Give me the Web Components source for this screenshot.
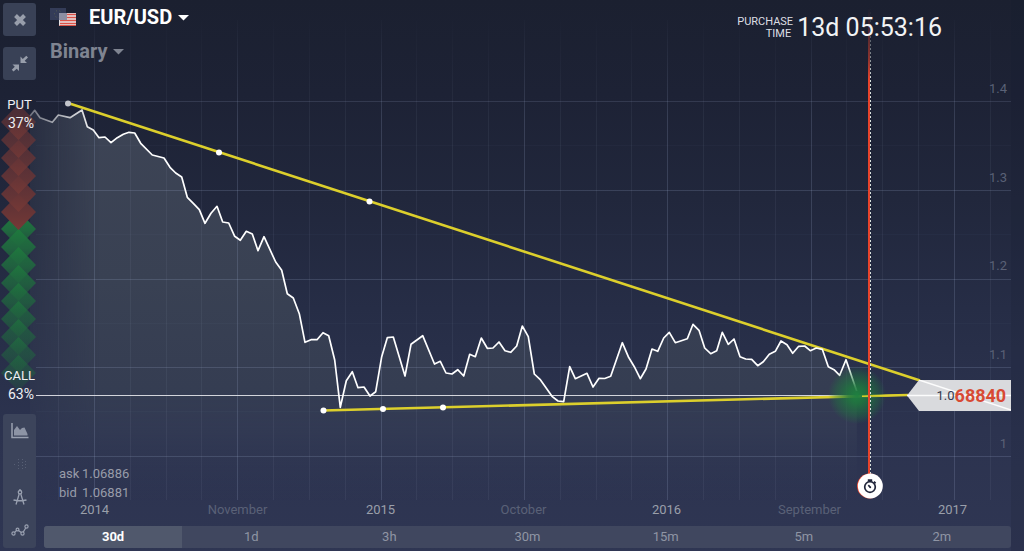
<!DOCTYPE html>
<html lang="en">
<head>
<meta charset="utf-8">
<title>EUR/USD Binary</title>
<style>
  html, body { margin: 0; min-height: 100vh; background: #2d3451; }
  body { font-family: Roboto, "Liberation Sans", sans-serif; font-size: 13px; color: #fff; }
</style>
</head>
<body>
<trade-room></trade-room>
<script>
const define = (name, html, setup) => customElements.define(name, class extends HTMLElement {
  constructor() {
    super();
    this.attachShadow({ mode: 'open' }).innerHTML = html;
  }
  connectedCallback() { if (setup) setup(this, this.shadowRoot); }
});

/* Price history in chart units (1024 x 551) */
const PRICE = `30,116 34.7,110.3 40,117.7 52.3,122.3 58.3,115 70,117.7 82,110 87.3,126.7 93.3,130 99,137.7 105,137 111,142.7
117.3,137.7 123.3,134.3 129,132.3 134.7,133 140.7,143.3 152.3,155 164,158 170,167.3 175.7,173 181.7,177 187.3,197.3 193.3,203.3
199.3,209.7 205,223.3 211,213.3 217,206.3 222.7,222 228.7,223 234.7,236.3 240.3,240.3 246.3,231.3 252.3,234 258,250.7 264,236.7
275.7,262 281.7,270.3 287.3,293.7 293.3,298 299.3,313.7 305,342.3 311,339.7 317,339.7 323,332.7 328.7,335.7 334.7,360 340.3,407.3
346.3,380.7 352.3,371.7 358,387.7 364,387 370,396 375.7,391.7 381.7,356.7 387.3,337.7 393.3,337 405,376 411,344.3 422.7,335.7
434.5,364 440.3,361.3 446,373 452,374 457.7,369.7 463.7,376 469.7,354.3 475.3,356.7 481.3,338 487.3,348.3 493,348 499,342
505,350.7 510.7,352.3 516.7,346 522.3,326 528.3,336.7 534.3,374 540,379.3 552,396.3 558,401 563.7,401.7 569.7,366.7 575.3,378.7
587,373.3 593,387 599,378.3 604.7,378.5 610.7,376.3 622.3,342.7 628.3,356.7 634.3,366.7 640.3,378.7 646,369 652,349 657.7,351.3
663.7,338 669.3,332.3 675.3,342.7 687.3,338.7 693,324.3 699,330.3 704.7,348 710.7,353.7 716.7,350.7 722.3,332.3 728.3,344.3
734,339 740,356.7 745.7,359 751.7,359.3 757.7,365.7 763.3,361.7 769.3,354.3 775.3,351.3 781,341 787,344.7 792.7,353.3
798.7,346.3 804.7,346 810.3,350.7 816.3,348 822.3,349.3 828.3,366.7 834,369.7 839.7,375.3 846,359.7 856.7,391`;

let grid = '';
for (let i = -1; i < 26; i++) {
  const x = Math.round(94 + i * 35.83) + .5;
  grid += `<path d="M${x} 20V500" class="${i % 4 === 0 ? 'major' : 'minor'}"/>`;
}
for (let i = 0; i < 5; i++) grid += `<path d="M36 ${Math.round(101 + i * 88.8) + .5}H1011" class="major"/>`;
for (let i = 0; i < 4; i++) grid += `<path d="M36 ${Math.round(145 + i * 88.8) + .5}H1011" class="faint"/>`;

define('trade-chart', `
<style>
  :host { display: block; position: absolute; inset: 0; }
  .plot { display: block; width: 100%; height: 100%; }
  path, polyline { fill: none; }
  .major { stroke: #a0b0d0; stroke-opacity: .2; }
  .minor { stroke: #a0b0d0; stroke-opacity: .08; }
  .faint { stroke: #a0b0d0; stroke-opacity: .03; }
</style>
<svg class="plot" viewBox="0 0 1024 551" preserveAspectRatio="none" aria-label="EUR/USD price chart">
  <defs>
    <linearGradient id="bg" x2="0" y2="1">
      <stop offset="0" stop-color="#1b2030"/><stop offset=".17" stop-color="#1d2235"/>
      <stop offset=".36" stop-color="#21273c"/><stop offset=".56" stop-color="#262d46"/>
      <stop offset=".78" stop-color="#2c334f"/><stop offset="1" stop-color="#2f3653"/>
    </linearGradient>
    <linearGradient id="area" gradientUnits="userSpaceOnUse" x1="0" y1="100" x2="0" y2="500">
      <stop offset="0" stop-color="#3d4455"/><stop offset=".45" stop-color="#394153"/>
      <stop offset=".72" stop-color="#353d52"/><stop offset=".82" stop-color="#333b54" stop-opacity=".9"/>
      <stop offset="1" stop-color="#303754" stop-opacity="0"/>
    </linearGradient>
    <linearGradient id="edge" gradientUnits="userSpaceOnUse" x1="30" y1="0" x2="100" y2="0">
      <stop offset="0" stop-color="#fff" stop-opacity=".35"/><stop offset="1" stop-color="#fff"/>
    </linearGradient>
    <linearGradient id="top" gradientUnits="userSpaceOnUse" x1="0" y1="20" x2="0" y2="120">
      <stop offset="0" stop-color="#fff" stop-opacity=".1"/><stop offset="1" stop-color="#fff"/>
    </linearGradient>
    <linearGradient id="expiry" gradientUnits="userSpaceOnUse" x1="0" y1="8" x2="0" y2="80">
      <stop offset="0" stop-color="#fff" stop-opacity="0"/><stop offset=".7" stop-color="#fff" stop-opacity=".55"/><stop offset="1" stop-color="#fff"/>
    </linearGradient>
    <radialGradient id="glow">
      <stop offset="0" stop-color="#1f8040"/><stop offset=".3" stop-color="#1f7a3e" stop-opacity=".85"/>
      <stop offset=".75" stop-color="#1f7a3e" stop-opacity=".35"/><stop offset="1" stop-color="#1f7a3e" stop-opacity="0"/>
    </radialGradient>
    <mask id="edgeMask" maskUnits="userSpaceOnUse" x="0" y="0" width="1024" height="551"><rect width="1024" height="551" fill="url(#edge)"/></mask>
    <mask id="topMask" maskUnits="userSpaceOnUse" x="0" y="0" width="1024" height="551"><rect width="1024" height="551" fill="url(#top)"/></mask>
    <mask id="expiryMask" maskUnits="userSpaceOnUse" x="0" y="0" width="1024" height="551"><rect width="1024" height="551" fill="url(#expiry)"/></mask>
  </defs>
  <rect width="1024" height="551" fill="url(#bg)"/>
  <g mask="url(#edgeMask)"><polygon points="${PRICE} 857,500 30,500" fill="url(#area)"/></g>
  <g mask="url(#topMask)">${grid}</g>
  <rect x="1011" width="13" height="551" fill="#171c30" fill-opacity=".15"/>
  <path d="M36 395.5H908" stroke="#e4e4ea" stroke-opacity=".9"/>
  <g stroke="#dccf2c" stroke-width="2.6">
    <path d="M68 103L920 380.5"/><path d="M323 410.5L908 395"/>
  </g>
  <g mask="url(#edgeMask)"><polyline points="${PRICE}" stroke="#fff" stroke-width="1.7" stroke-linejoin="round"/></g>
  <circle cx="857" cy="395" r="29" fill="url(#glow)"/>
  <path d="M862 396.2L908 395" stroke="#dccf2c" stroke-width="1.6"/>
  <g mask="url(#expiryMask)">
    <path d="M869 8V480" stroke="#e8442c" stroke-width="2"/>
    <path d="M870.5 8V480" stroke="#d8e0dc" stroke-dasharray="2 2"/>
  </g>
  <g fill="#fff">
    <circle cx="68" cy="103.5" r="3" fill="#c3c5cb"/><circle cx="219" cy="152.5" r="3"/><circle cx="369.500" cy="201.500" r="3"/>
    <circle cx="323.500" cy="410.500" r="3"/><circle cx="383" cy="409" r="3"/><circle cx="443" cy="407.500" r="3"/>
  </g>
</svg>`);

define('price-tag', `
<style>
  :host { display: flex; align-items: center; justify-content: flex-end; position: absolute; right: 1.25%; top: 69%;
    width: 104px; height: 31px; box-sizing: border-box; padding-right: 5px; }
  svg { position: absolute; inset: 0; }
  span { position: relative; font-size: 13px; color: #33384e; line-height: 31px; }
  b { position: relative; font-size: 18px; color: #d84a34; line-height: 31px; }
</style>
<svg width="104" height="31" viewBox="0 0 104 31">
  <path d="M0 15.500L12 0H104V31H12Z" fill="#d9dadd"/>
  <path d="M0 15.500H104M12 0L104 30" stroke="#fff" stroke-width="1.500" fill="none" opacity=".9"/>
</svg>
<span><slot name="base"></slot></span><b><slot></slot></b>`);

define('expiry-marker', `
<style>
  :host { display: block; position: absolute; left: 84.96%; top: 88.2%; width: 26px; height: 26px; margin: -13px; }
  svg { display: block; }
</style>
<svg width="26" height="26" viewBox="0 0 26 26" fill="none" stroke="#20253a">
  <circle cx="12.500" cy="13" r="12.500" fill="#e8442c" stroke="none"/><circle cx="13.300" cy="13" r="12.500" fill="#fff" stroke="none"/>
  <circle cx="13" cy="14" r="5.300" stroke-width="1.700"/>
  <path d="M10.800 7.200H15.200M13 7V9M17 8.700L18.600 10.300M13 14L11.300 12.200" stroke-width="1.700"/><circle cx="13.200" cy="14.200" r="1" fill="#20253a" stroke="none"/>
</svg>`);

define('icon-button', `
<style>
  :host { display: block; }
  button { display: flex; align-items: center; justify-content: center; width: 100%; height: 33px; padding: 0; border: 0;
    border-radius: 3px; background: #394156; cursor: pointer; }
  :host([plain]) button { background: none; height: 100%; }
</style>
<button type="button"><slot></slot></button>`, (el, root) => {
  root.querySelector('button').setAttribute('aria-label', el.getAttribute('label'));
});

const diamonds = () => {
  let s = '';
  const d = (y, f, o) => `<path d="M18.500 ${y - 18}L36 ${y}L18.500 ${y + 18}L1 ${y}Z" fill="url(#${f})" opacity="${o}"/>`;
  for (let i = 0; i < 9; i++) s += d(134 + i * 18, 'up', Math.max(.45, 1 - i * .07).toFixed(2));
  for (let i = 5; i >= 0; i--) s += d(27 + i * 18, 'down', (.7 + i * .06).toFixed(2));
  return s;
};
define('mood-gauge', `
<style>
  :host { display: flex; flex-direction: column; justify-content: space-between; position: relative; flex: 1;
    margin: 15px 0 10px; line-height: 19px; text-align: center; color: #eef0f4; }
  svg { position: absolute; left: -3px; top: 0; width: 39px; height: 100%; }
  div { position: relative; display: flex; flex-direction: column; }
  b { font-weight: 400; font-size: 14px; padding-left: 3px; }
</style>
<svg viewBox="0 0 39 309" preserveAspectRatio="none" aria-hidden="true">
  <defs>
    <linearGradient id="up" x2="0" y2="1"><stop offset="0" stop-color="#1e7b3d"/><stop offset=".55" stop-color="#20683f"/><stop offset="1" stop-color="#24503f" stop-opacity=".8"/></linearGradient>
    <linearGradient id="down" x2="0" y2="1"><stop offset="0" stop-color="#5a3036"/><stop offset=".55" stop-color="#683536"/><stop offset="1" stop-color="#763936"/></linearGradient>
  </defs>
  ${diamonds()}
</svg>
<div><span>PUT</span><b>37%</b></div>
<div><span>CALL</span><b>63%</b></div>`);

define('side-rail', `
<style>
  :host { display: flex; flex-direction: column; box-sizing: border-box; padding: 3px; position: relative; }
  .close { margin-bottom: 11px; }
  nav { display: flex; flex-direction: column; height: 134px; border-radius: 3px; background: #3c445b; }
  nav icon-button { flex: 1; }
  svg { display: block; fill: none; stroke: #99a0b0; }
</style>
<icon-button class="close" label="Close"><svg width="33" height="33"><path d="M12.500 12.500L21.500 21.500M21.500 12.500L12.500 21.500" stroke="#989eab" stroke-width="4"/></svg></icon-button>
<icon-button label="Exit full screen"><svg width="33" height="33"><g fill="#989eab" stroke="none">
  <path d="M17.500 9.500V16H24L21.700 13.700L25 10.400L23.300 8.700L19.800 12Z"/><path d="M16 24V17.500H9.500L11.800 19.800L8.800 22.800L10.500 24.500L13.700 21.700Z"/></g></svg></icon-button>
<mood-gauge></mood-gauge>
<nav aria-label="Chart tools">
  <icon-button plain label="Chart type"><svg width="18" height="16" viewBox="0 0 18 16"><path d="M1 0V14.500H17.500" stroke-width="1.500"/><path d="M3 12.500V7L6 3L9 7L11 5L13.500 4.500L16.500 11V12.500Z" fill="#8d94a5" stroke="none"/></svg></icon-button>
  <icon-button plain label="Candles"><svg width="12" height="12" viewBox="0 0 12 12"><path d="M4.500 1V12M8.500 1V12M0 6.500H3M11.500 3V10" stroke-dasharray="1 2" opacity=".3"/></svg></icon-button>
  <icon-button plain label="Drawing tools"><svg width="14" height="17" viewBox="0 0 14 17" stroke-width="1.300"><circle cx="7" cy="3.200" r="1.700"/><path d="M7 0V2M6.200 5L3 15.500M7.800 5L11 15.500M.5 11Q7 12.500 13.500 11"/></svg></icon-button>
  <icon-button plain label="Indicators"><svg width="18" height="14" viewBox="0 0 18 14" stroke-width="1.200"><circle cx="2.500" cy="9.500" r="1.600"/><circle cx="6.500" cy="5.500" r="1.400"/><circle cx="11.500" cy="9.500" r="1.600"/><circle cx="15.500" cy="2.500" r="1.600"/><path d="M3.600 8.400L5.500 6.500M7.500 6.500L10.300 8.600M12.200 8.100L14.700 4"/></svg></icon-button>
</nav>`);

define('drop-down', `
<style>
  :host { display: flex; align-items: center; gap: 5px; font-size: 20px; font-weight: 700; line-height: 22px; }
  select { appearance: none; border: 0; padding: 0; margin: 0; background: none; color: inherit; font: inherit; cursor: pointer; }
  svg { display: block; fill: currentColor; pointer-events: none; }
</style>
<select></select><svg width="11" height="7" viewBox="0 0 11 7"><path d="M0 1H11L5.500 6.500Z"/></svg>`, (el, root) => {
  const s = root.querySelector('select');
  s.setAttribute('aria-label', el.getAttribute('label'));
  s.add(new Option(el.getAttribute('value')));
});

define('room-header', `
<style>
  :host { display: flex; justify-content: space-between; position: relative; padding-left: 11px; }
  .pair { display: flex; gap: 13px; margin-top: 6px; height: 22px; align-items: center; }
  .flags { display: block; }
  .kind { margin-top: 12px; color: #7f8491; }
  .time { display: flex; gap: 6px; margin-top: 13px; margin-right: 82px; height: 30px; align-items: center; }
  .time label { width: 54px; font-size: 11px; line-height: 12px; text-align: right; color: #dcdee3; }
  .time output { font-size: 25px; line-height: 30px; color: #f2f3f5; }
</style>
<div>
  <div class="pair">
    <svg class="flags" width="26" height="18" viewBox="0 0 26 18" aria-hidden="true">
      <rect width="16" height="12" fill="#343c58"/><circle cx="8" cy="6" r="3.500" fill="none" stroke="#59604f" stroke-dasharray="1 2.500"/>
      <rect x="9" y="5" width="17" height="13" fill="#e6e2e4"/>
      <path d="M10 6.500H26M10 9.500H26M10 12.500H26M10 15.500H26" stroke="#dc5348" stroke-width="1.500"/><path d="M9.500 17.500H26" stroke="#dc5348"/>
      <rect x="9" y="5" width="8" height="7" fill="#8d8fa3"/>
    </svg>
    <drop-down label="Asset" value="EUR/USD"></drop-down>
  </div>
  <drop-down class="kind" label="Option type" value="Binary"></drop-down>
</div>
<div class="time"><label for="left">PURCHASE TIME</label><output id="left">13d 05:53:16</output></div>`);

define('quote-list', `
<style>
  :host { display: block; position: relative; color: #989ca9; line-height: 19px; }
  dl { display: grid; grid-template-columns: 23px auto; margin: 0; justify-content: start; }
  dd { margin: 0; }
</style>
<dl><dt>ask</dt><dd>1.06886</dd><dt>bid</dt><dd>1.06881</dd></dl>`);

define('price-axis', `
<style>
  :host { display: flex; flex-direction: column; position: relative; color: #5a6176; text-align: right; }
  span { flex: 1; display: flex; align-items: center; justify-content: flex-end; }
</style>
<span>1.4</span><span>1.3</span><span>1.2</span><span>1.1</span><span>1</span>`);

define('date-axis', `
<style>
  :host { display: grid; grid-template-columns: repeat(7, 1fr); position: relative; color: #5a6177; text-align: center; line-height: 16px; }
  b { font-weight: 400; color: #9a9faa; }
</style>
<b>2014</b><span>November</span><b>2015</b><span>October</span><b>2016</b><span>September</span><b>2017</b>`);

define('time-frames', `
<style>
  :host { display: flex; position: relative; height: 22px; border-radius: 3px; overflow: hidden; background: #40475f; }
  button { flex: 1; border: 0; padding: 0; background: none; color: #8f95a4; font: inherit; line-height: 22px; cursor: pointer; }
  button[aria-pressed=true] { background: #50586c; color: #fff; font-weight: 700; }
</style>
<button type="button" aria-pressed="true">30d</button><button type="button">1d</button><button type="button">3h</button><button type="button">30m</button><button type="button">15m</button><button type="button">5m</button><button type="button">2m</button>`);

define('trade-room', `
<style>
  :host { display: grid; position: relative; min-height: 100vh; overflow: hidden;
    grid-template-columns: 39px 1fr; grid-template-rows: auto 1fr 16px 33px; }
  side-rail { grid-area: 1 / 1 / 5 / 2; }
  room-header { grid-area: 1 / 2; }
  quote-list { grid-area: 2 / 2; align-self: end; padding-left: 20px; }
  price-axis { grid-area: 1 / 2 / 3 / 3; justify-self: end; margin: 44px 17px 14px 0; }
  date-axis { grid-area: 3 / 1 / 4 / 3; padding-left: 23px; }
  time-frames { grid-area: 4 / 2; margin: 8px 13px 3px 5px; }
</style>
<trade-chart></trade-chart>
<price-axis></price-axis>
<room-header></room-header>
<quote-list></quote-list>
<date-axis></date-axis>
<side-rail></side-rail>
<time-frames></time-frames>
<price-tag><span slot="base">1.0</span>68840</price-tag>
<expiry-marker></expiry-marker>`);
</script>
</body>
</html>
